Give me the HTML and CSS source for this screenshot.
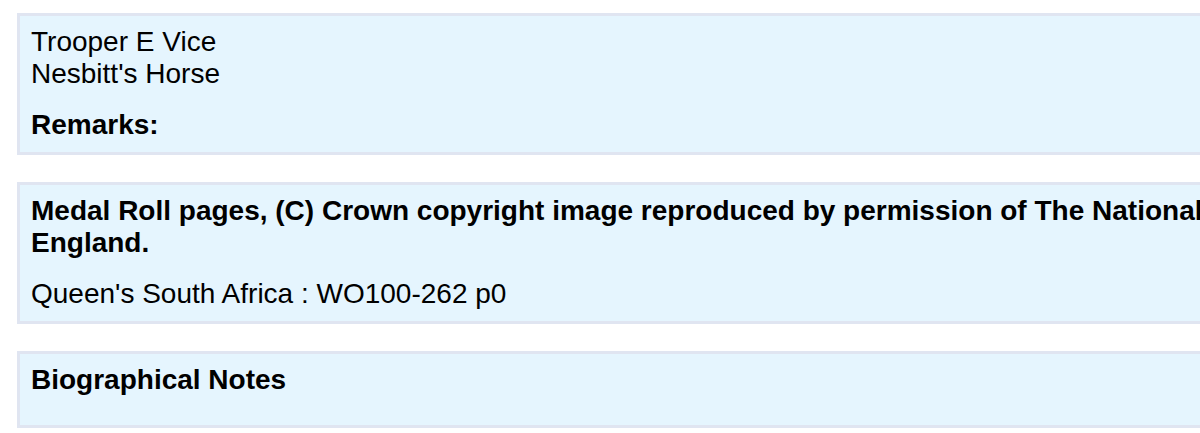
FILE: index.html
```html
<!DOCTYPE html>
<html lang="en">
<head>
    <meta charset="UTF-8">
    <meta name="viewport" content="width=device-width, initial-scale=1.0">
    <title>Trooper E Vice - Nesbitt's Horse</title>
    <link rel="stylesheet" href="styles.css">
</head>
<body>
    <div class="record">
        <div class="panel">
            <p>Trooper E Vice<br>Nesbitt's Horse</p>
            <p class="label">Remarks:</p>
        </div>
        <div class="panel">
            <p class="label">Medal Roll pages, (C) Crown copyright image reproduced by permission of The National Archives, London, England.</p>
            <p>Queen's South Africa : WO100-262 p0</p>
        </div>
        <div class="panel notes">
            <p class="label">Biographical Notes</p>
        </div>
    </div>
</body>
</html>
```

FILE: styles.css
```css
html {
    overflow: hidden;
}
body {
    font-family: "Liberation Sans", Arial, sans-serif;
    font-size: 28px;
    margin: 0;
    padding: 0;
    color: #000;
    background-color: #fff;
}
.record {
    width: 1560px;
    padding: 13px 0 0 17px;
}
.panel {
    background-color: #e5f5fe;
    border: 3px solid #e0e5f1;
    padding: 10px 11px 11px;
    margin-bottom: 27px;
}
.panel p {
    margin: 0;
}
.panel p + p {
    margin-top: 19px;
}
.label {
    font-weight: bold;
}
.notes {
    padding-bottom: 29px;
}
```
